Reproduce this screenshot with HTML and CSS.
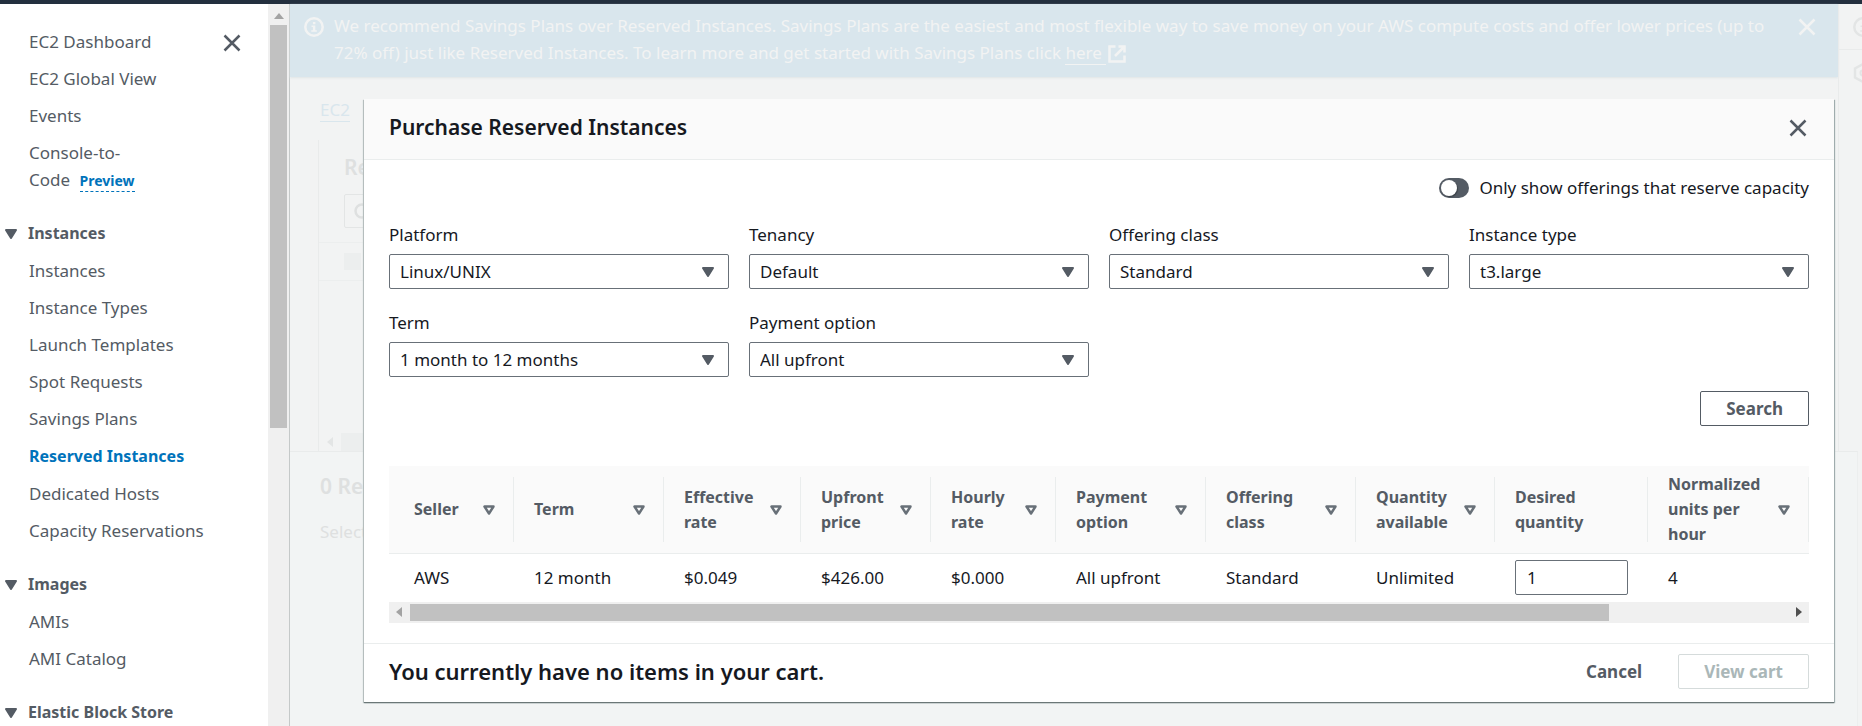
FILE: index.html
```html
<!DOCTYPE html>
<html lang="en">
<head>
<meta charset="utf-8">
<title>Purchase Reserved Instances</title>
<link rel="stylesheet" href="styles.css">
</head>
<body>
<div class="topbar"></div>
<div class="app">
  <nav class="sidebar" aria-label="EC2">
    <div class="sidebar-content">
      <div class="nav-top">
        <ul class="nav-list">
          <li><a href="#">EC2 Dashboard</a></li>
          <li><a href="#">EC2 Global View</a></li>
          <li><a href="#">Events</a></li>
          <li class="narrow"><a href="#">Console-to-Code</a> <a class="preview" href="#">Preview</a></li>
        </ul>
        <button class="icon-button" aria-label="Close navigation"><svg width="20" height="20" viewBox="0 0 20 20"><path d="M2.500 2.500l15 15M17.500 2.500l-15 15" fill="none" stroke="currentColor" stroke-width="2.500"/></svg></button>
      </div>
      <button class="nav-heading"><svg width="12" height="10" viewBox="0 0 12 10"><path d="M1 1h10L6 9z" fill="currentColor" stroke="currentColor" stroke-width="2" stroke-linejoin="round"/></svg>Instances</button>
      <ul class="nav-list">
        <li><a href="#">Instances</a></li>
        <li><a href="#">Instance Types</a></li>
        <li><a href="#">Launch Templates</a></li>
        <li><a href="#">Spot Requests</a></li>
        <li><a href="#">Savings Plans</a></li>
        <li><a href="#" class="active">Reserved Instances</a></li>
        <li><a href="#">Dedicated Hosts</a></li>
        <li><a href="#">Capacity Reservations</a></li>
      </ul>
      <button class="nav-heading"><svg width="12" height="10" viewBox="0 0 12 10"><path d="M1 1h10L6 9z" fill="currentColor" stroke="currentColor" stroke-width="2" stroke-linejoin="round"/></svg>Images</button>
      <ul class="nav-list">
        <li><a href="#">AMIs</a></li>
        <li><a href="#">AMI Catalog</a></li>
      </ul>
      <button class="nav-heading"><svg width="12" height="10" viewBox="0 0 12 10"><path d="M1 1h10L6 9z" fill="currentColor" stroke="currentColor" stroke-width="2" stroke-linejoin="round"/></svg>Elastic Block Store</button>
    </div>
    <div class="vscroll"><svg width="10" height="6" viewBox="0 0 10 6"><path d="M5 0l5 6H0z" fill="#a3a3a3"/></svg><div class="vthumb"></div></div>
  </nav>
  <main class="page">
    <div class="banner">
      <svg class="banner-info" width="20" height="20" viewBox="0 0 20 20"><circle cx="10" cy="10" r="8.700" fill="none" stroke="currentColor" stroke-width="2.500"/><path d="M8.900 5h2.500v2.200H8.900zM7.500 8.500h3.800v4.700h1.500v1.600H7.300v-1.600h1.600V10H7.500z" fill="currentColor"/></svg>
      <p>We recommend Savings Plans over Reserved Instances. Savings Plans are the easiest and most flexible way to save money on your AWS compute costs and offer lower prices (up to 72% off) just like Reserved Instances. To learn more and get started with Savings Plans click <a href="#">here&nbsp;</a><svg width="18" height="18" viewBox="0 0 18 18"><path d="M7.500 1.500h-6v15h15v-6M10.500 1.500h6v6M16.500 1.500L7 11" fill="none" stroke="currentColor" stroke-width="2.500"/></svg></p>
      <button class="icon-button light" aria-label="Dismiss"><svg width="20" height="20" viewBox="0 0 20 20"><path d="M2.500 2.500l15 15M17.500 2.500l-15 15" fill="none" stroke="currentColor" stroke-width="2.500"/></svg></button>
    </div>
    <div class="backdrop">
      <div class="crumbs"><a href="#">EC2</a></div>
      <section class="ghost-panel">
        <h2>Reserved Instances</h2>
        <div class="ghost-search"><svg width="20" height="20" viewBox="0 0 20 20"><circle cx="9" cy="9" r="6.500" fill="none" stroke="currentColor" stroke-width="2.500"/></svg></div>
        <div class="ghost-head"><span></span></div>
        <div class="ghost-scroll"><svg width="6" height="10" viewBox="0 0 6 10"><path d="M6 0v10L0 5z" fill="#e3e5e5"/></svg><span></span></div>
      </section>
      <section class="ghost-detail">
        <h2>0 Reserved Instances</h2>
        <p>Select an instance</p>
      </section>
    </div>
  </main>
  <aside class="tools">
    <div class="tool"><svg width="20" height="20" viewBox="0 0 20 20"><circle cx="10" cy="10" r="8.700" fill="none" stroke="currentColor" stroke-width="2.500"/><path d="M8.900 5h2.500v2.200H8.900zM7.500 8.500h3.800v4.700h1.500v1.600H7.300v-1.600h1.600V10H7.500z" fill="currentColor"/></svg></div>
    <div class="tool"><svg width="20" height="20" viewBox="0 0 20 20"><path d="M10 1l8 4.500v9L10 19l-8-4.500v-9z" fill="none" stroke="currentColor" stroke-width="2.500"/><circle cx="10" cy="10" r="2.500" fill="none" stroke="currentColor" stroke-width="2"/></svg></div>
  </aside>
</div>

<div class="modal" role="dialog" aria-labelledby="dlg-title">
  <header class="modal-head">
    <h1 id="dlg-title">Purchase Reserved Instances</h1>
    <button class="icon-button" aria-label="Close"><svg width="20" height="20" viewBox="0 0 20 20"><path d="M2.500 2.500l15 15M17.500 2.500l-15 15" fill="none" stroke="currentColor" stroke-width="2.500"/></svg></button>
  </header>
  <div class="modal-body">
    <label class="toggle"><input type="checkbox" role="switch"><span>Only show offerings that reserve capacity</span></label>
    <div class="filters">
      <div class="field"><label for="platform">Platform</label><select id="platform"><option>Linux/UNIX</option></select></div>
      <div class="field"><label for="tenancy">Tenancy</label><select id="tenancy"><option>Default</option></select></div>
      <div class="field"><label for="class">Offering class</label><select id="class"><option>Standard</option></select></div>
      <div class="field"><label for="type">Instance type</label><select id="type"><option>t3.large</option></select></div>
      <div class="field"><label for="term">Term</label><select id="term"><option>1 month to 12 months</option></select></div>
      <div class="field"><label for="payment">Payment option</label><select id="payment"><option>All upfront</option></select></div>
    </div>
    <div class="search-row"><button class="button">Search</button></div>
    <table class="offers">
      <colgroup><col class="c125"><col class="c150"><col class="c137"><col class="c130"><col class="c125"><col class="c150"><col class="c150"><col class="c139"><col class="c153"><col class="c161"></colgroup>
      <thead>
        <tr>
          <th><div class="th"><span>Seller</span><svg class="sort" width="12" height="10" viewBox="0 0 12 10"><path d="M1.500 1.500h9L6 8.500z"/></svg></div></th>
          <th><div class="th"><span>Term</span><svg class="sort" width="12" height="10" viewBox="0 0 12 10"><path d="M1.500 1.500h9L6 8.500z"/></svg></div></th>
          <th><div class="th"><span>Effective rate</span><svg class="sort" width="12" height="10" viewBox="0 0 12 10"><path d="M1.500 1.500h9L6 8.500z"/></svg></div></th>
          <th><div class="th"><span>Upfront price</span><svg class="sort" width="12" height="10" viewBox="0 0 12 10"><path d="M1.500 1.500h9L6 8.500z"/></svg></div></th>
          <th><div class="th"><span>Hourly rate</span><svg class="sort" width="12" height="10" viewBox="0 0 12 10"><path d="M1.500 1.500h9L6 8.500z"/></svg></div></th>
          <th><div class="th"><span>Payment option</span><svg class="sort" width="12" height="10" viewBox="0 0 12 10"><path d="M1.500 1.500h9L6 8.500z"/></svg></div></th>
          <th><div class="th"><span>Offering class</span><svg class="sort" width="12" height="10" viewBox="0 0 12 10"><path d="M1.500 1.500h9L6 8.500z"/></svg></div></th>
          <th><div class="th"><span>Quantity available</span><svg class="sort" width="12" height="10" viewBox="0 0 12 10"><path d="M1.500 1.500h9L6 8.500z"/></svg></div></th>
          <th><div class="th"><span id="qty">Desired<br>quantity</span></div></th>
          <th><div class="th"><span>Normalized units per hour</span><svg class="sort" width="12" height="10" viewBox="0 0 12 10"><path d="M1.500 1.500h9L6 8.500z"/></svg></div></th>
        </tr>
      </thead>
      <tbody>
        <tr><td>AWS</td><td>12 month</td><td>$0.049</td><td>$426.00</td><td>$0.000</td><td>All upfront</td><td>Standard</td><td>Unlimited</td><td><input type="text" value="1" aria-labelledby="qty"></td><td>4</td></tr>
      </tbody>
    </table>
    <div class="hscroll"><svg width="6" height="10" viewBox="0 0 6 10"><path d="M6 0v10L0 5z" fill="#a3a3a3"/></svg><div class="htrack"><div class="hthumb"></div></div><svg width="6" height="10" viewBox="0 0 6 10"><path d="M0 0v10l6-5z" fill="#505050"/></svg></div>
  </div>
  <footer class="modal-foot">
    <h2>You currently have no items in your cart.</h2>
    <div class="actions"><button class="button plain">Cancel</button><button class="button" disabled>View cart</button></div>
  </footer>
</div>
</body>
</html>
```
FILE: styles.css
```css
* { box-sizing: border-box; }
html, body { height: 100%; }
body {
  margin: 0;
  display: flex;
  flex-direction: column;
  overflow: hidden;
  background: #f2f3f3;
  color: #16191f;
  font: 17px/27px "Noto Sans", sans-serif;
}
h1, h2, p, ul { margin: 0; padding: 0; }
h1, h2 { font-size: 21px; line-height: 30px; font-weight: 600; }
button { font: inherit; cursor: pointer; }
svg { display: block; flex: none; }

.topbar { flex: none; height: 4px; background: #232f3e; }
.app { flex: 1; min-height: 0; display: flex; }

.sidebar {
  flex: none;
  width: 290px;
  display: flex;
  overflow: hidden;
  background: #fff;
  border-right: 1px solid #c5c9c9;
}
.sidebar-content { flex: 1; padding-top: 24px; color: #545b64; }
.nav-top { display: flex; justify-content: space-between; align-items: flex-start; padding-right: 26px; }
.nav-top .icon-button { margin-top: 5px; }
.nav-list { display: flex; flex-direction: column; gap: 10px; padding-left: 29px; list-style: none; }
.nav-list a { color: inherit; text-decoration: none; }
.nav-list .active { color: #0073bb; font-size: 16px; font-weight: 700; }
.nav-list .narrow { max-width: 120px; }
.nav-list .preview {
  display: inline-block;
  margin-left: 5px;
  color: #0073bb;
  font-size: 14px;
  line-height: 20px;
  font-weight: 700;
  border-bottom: 1px dashed #0073bb;
}
.nav-heading {
  display: flex;
  align-items: center;
  gap: 11px;
  margin: 27px 0 10px;
  padding: 0 0 0 5px;
  border: 0;
  background: none;
  color: #545b64;
  font-size: 16px;
  font-weight: 700;
}
.icon-button {
  width: 20px;
  height: 20px;
  padding: 0;
  border: 0;
  background: none;
  color: #545b64;
}
.icon-button.light { color: #f2f3f3; }
.vscroll {
  flex: none;
  width: 21px;
  padding: 9px 2px 0;
  background: #f0f0f0;
  display: flex;
  flex-direction: column;
  align-items: center;
  gap: 6px;
}
.vthumb { width: 100%; height: 56.5%; background: #c1c1c1; }

.page { flex: 1; min-width: 0; display: flex; flex-direction: column; }
.banner {
  flex: none;
  display: flex;
  align-items: flex-start;
  gap: 10px;
  padding: 8px 21px 11px 14px;
  background: #d9e6ed;
  box-shadow: 0 1px 2px #dfe5e7;
  color: #f2f3f3;
}
.banner p { flex: 1; padding-right: 16px; }
.banner a { display: inline-block; line-height: 23px; color: inherit; text-decoration: none; border-bottom: 1px solid; }
.banner p svg { display: inline-block; vertical-align: middle; margin-left: 2px; }
.banner-info, .banner .icon-button { margin-top: 5px; }
.backdrop { flex: 1; display: flex; flex-direction: column; padding-top: 19px; color: #dee0e0; }
.crumbs { padding-left: 30px; }
.crumbs a { color: #d9e6ed; text-decoration: none; border-bottom: 1px solid; }
.ghost-panel { margin: 17px 20px 0 28px; border-left: 1px solid #e9ebeb; }
.ghost-panel h2 { padding: 12px 25px; }
.ghost-search { height: 34px; margin: 0 25px; padding: 7px 8px; border: 1px solid #e3e5e5; border-radius: 2px; }
.ghost-head { margin-top: 14px; padding: 10px 25px; border-top: 1px solid #eceeee; border-bottom: 1px solid #eceeee; }
.ghost-head span { display: block; width: 17px; height: 17px; background: #eceeee; }
.ghost-scroll { display: flex; align-items: center; gap: 8px; margin-top: 152px; padding-left: 8px; }
.ghost-scroll span { width: 80%; height: 18px; background: #eceeee; }
.ghost-detail {
  position: relative;
  flex: 1;
  margin-right: -20px;
  padding: 19px 30px;
  background: #f2f4f4;
  border-top: 1px solid #e9ebeb;
  border-right: 1px solid #eceeee;
}
.ghost-detail p { padding-top: 17px; }

.tools { flex: none; width: 24px; overflow: hidden; border-left: 1px solid #e9ebeb; color: #e3e5e5; }
.tool { height: 46px; padding: 13px 0 0 14px; border-bottom: 1px solid #e9ebeb; }
.tool + .tool { border: 0; }

.modal {
  position: absolute;
  top: 99px;
  left: 364px;
  right: 28px;
  background: #fff;
  box-shadow: 0 1px 1px 0 #6b7777, 1px 1px 1px 0 #aab7b8, -1px 1px 1px 0 #c5cccc;
}
.modal-head {
  display: flex;
  justify-content: space-between;
  align-items: center;
  padding: 13px 26px 17px 25px;
  background: #fafafa;
  border-bottom: 1px solid #eaeded;
}
.modal-head .icon-button { margin-top: 2px; }
.modal-body { padding: 14px 25px 20px; }
.toggle { display: flex; justify-content: flex-end; align-items: center; gap: 10px; margin-bottom: 20px; }
.toggle input {
  appearance: none;
  width: 30px;
  height: 20px;
  margin: 0;
  padding: 2px;
  border-radius: 10px;
  background: #545b64;
}
.toggle input::before {
  content: "";
  display: block;
  width: 16px;
  height: 16px;
  border-radius: 50%;
  background: #fff;
  box-shadow: 1px 1px 1px #3b4148;
}
.toggle input:checked::before { margin-left: auto; }
.filters { display: grid; grid-template-columns: repeat(4, 1fr); gap: 20px; }
.field { display: flex; flex-direction: column; gap: 6px; }
select, input[type="text"] {
  width: 100%;
  height: 35px;
  border: 1px solid #687078;
  border-radius: 2px;
  background: #fff;
  color: #16191f;
  font: inherit;
}
select {
  appearance: none;
  padding: 0 10px;
  background: #fff url("data:image/svg+xml,%3Csvg xmlns='http://www.w3.org/2000/svg' width='12' height='10' viewBox='0 0 12 10'%3E%3Cpath d='M1 1h10L6 9z' fill='%23545b64' stroke='%23545b64' stroke-width='2' stroke-linejoin='round'/%3E%3C/svg%3E") no-repeat right 14px center;
}
.search-row { display: flex; justify-content: flex-end; margin: 14px 0 40px; }
.button {
  height: 35px;
  padding: 0 25px;
  border: 1px solid #545b64;
  border-radius: 2px;
  background: #fff;
  color: #545b64;
  font-weight: 700;
}
.button.plain { border-color: transparent; }
.button:disabled { border-color: #d5dbdb; color: #aab7b8; }

.offers { width: 100%; table-layout: fixed; border-collapse: collapse; }
.c125 { width: 125px; }
.c130 { width: 130px; }
.c137 { width: 137px; }
.c139 { width: 139px; }
.c150 { width: 150px; }
.c153 { width: 153px; }
.c161 { width: 161px; }
.offers th { padding: 5px 0; background: #fafafa; border-bottom: 1px solid #eaeded; text-align: left; }
.th {
  height: 77px;
  display: flex;
  align-items: center;
  justify-content: space-between;
  padding: 0 19px 0 20px;
  color: #545b64;
  font-size: 16px;
  font-weight: 700;
  line-height: 25px;
  background: linear-gradient(#eaeded, #eaeded) no-repeat right center / 1px 65px;
}
.th span { flex: 0 1 auto; }
.offers td { height: 48px; padding: 0 20px; }
th:first-child .th, .offers td:first-child { padding-left: 25px; }
.sort { fill: none; stroke: #687078; stroke-width: 2.500; stroke-linejoin: round; }
td input[type="text"] { display: block; padding: 0 11px; }
.hscroll { display: flex; align-items: center; gap: 8px; height: 21px; padding: 0 7px; background: #f0f0f0; }
.htrack { flex: 1; }
.hthumb { width: 87%; height: 17px; background: #c1c1c1; }

.modal-foot {
  display: flex;
  justify-content: space-between;
  align-items: center;
  padding: 10px 25px 13px;
  border-top: 1px solid #eaeded;
}
.modal-foot h2 { font-size: 22px; }
.actions { display: flex; gap: 10px; }
```
